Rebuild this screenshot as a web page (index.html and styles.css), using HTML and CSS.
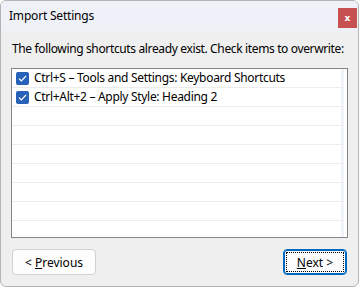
FILE: index.html
```html
<!DOCTYPE html>
<html lang="en">
<head>
    <meta charset="UTF-8">
    <title>Import Settings</title>
    <link rel="stylesheet" href="styles.css">
</head>
<body>
    <div class="window">
        <div class="title-bar">
            <span class="title">Import Settings</span>
            <button class="close-button">x</button>
        </div>
        <div class="content">
            <p class="message">The following shortcuts already exist. Check items to overwrite:</p>
            <ul class="shortcut-list">
                <li><span class="check"><svg width="9" height="7" viewBox="0 0 9 7"><path d="M1 3.6 L3.3 5.8 L8 1" fill="none" stroke="#fff" stroke-width="1.2"/></svg></span>Ctrl+S – Tools and Settings: Keyboard Shortcuts</li>
                <li><span class="check"><svg width="9" height="7" viewBox="0 0 9 7"><path d="M1 3.6 L3.3 5.8 L8 1" fill="none" stroke="#fff" stroke-width="1.2"/></svg></span>Ctrl+Alt+2 – Apply Style: Heading 2</li>
                <li></li>
                <li></li>
                <li></li>
                <li></li>
                <li></li>
                <li></li>
                <li></li>
            </ul>
            <div class="buttons">
                <button class="dialog-button prev-button">&lt; <u>P</u>revious</button>
                <button class="dialog-button next-button"><span class="focus"><u>N</u>ext &gt;</span></button>
            </div>
        </div>
    </div>
</body>
</html>
```

FILE: styles.css
```css
body {
    margin: 0;
    font-family: "Noto Sans", "Open Sans", sans-serif;
    font-size: 12px;
    color: #000;
    background-color: #fff;
}

.window {
    width: 357px;
    height: 285px;
    border: 1px solid #b4b4b4;
    border-radius: 6px;
    overflow: hidden;
    background-color: #efefef;
}

.title-bar {
    height: 30px;
    background-color: #eef1f8;
    display: flex;
    align-items: center;
    justify-content: space-between;
    padding-left: 8px;
    padding-right: 1px;
}

.title {
    font-size: 12px;
    margin-top: -1px;
    letter-spacing: -0.2px;
}

.close-button {
    width: 19px;
    height: 20px;
    border: none;
    background-color: #c75050;
    color: #fff;
    font-family: "DejaVu Sans", sans-serif;
    font-weight: bold;
    font-size: 9px;
    padding: 0;
    margin-top: 4px;
}

.content {
    padding: 0 10px;
}

.message {
    margin: 9px 0 0 1px;
    height: 18px;
    line-height: 18px;
    white-space: nowrap;
    letter-spacing: -0.36px;
}

.shortcut-list {
    list-style: none;
    margin: 10px 0 0 0;
    padding: 0 3px 0 0;
    height: 168px;
    border: 1px solid #858585;
    background-color: #fff;
    overflow: hidden;
}

.shortcut-list li {
    height: 18px;
    border-bottom: 1px solid #ececec;
    border-right: 3px solid #f0f3f9;
    display: flex;
    align-items: center;
    line-height: 18px;
    white-space: nowrap;
    letter-spacing: -0.3px;
}

.check {
    width: 13px;
    height: 13px;
    margin: 0 5px 0 4px;
    border-radius: 2px;
    background-color: #2762b8;
    display: flex;
    align-items: center;
    justify-content: center;
}

.buttons {
    display: flex;
    justify-content: space-between;
    margin-top: 11px;
    padding: 0 1px;
}

.dialog-button {
    height: 26px;
    font-family: "Noto Sans", "Open Sans", sans-serif;
    font-size: 12px;
    background-color: #fdfdfd;
    border: 1px solid #d1d1d1;
    border-radius: 4px;
    color: #000;
    padding: 0;
}

.prev-button {
    width: 84px;
}

.next-button {
    width: 64px;
    border: 1px solid #0067c0;
    box-shadow: inset 0 0 0 1px #0067c0;
    padding: 2px;
}

.focus {
    display: flex;
    align-items: center;
    justify-content: center;
    height: 100%;
    border: 1px dotted #000;
    box-sizing: border-box;
}
```
